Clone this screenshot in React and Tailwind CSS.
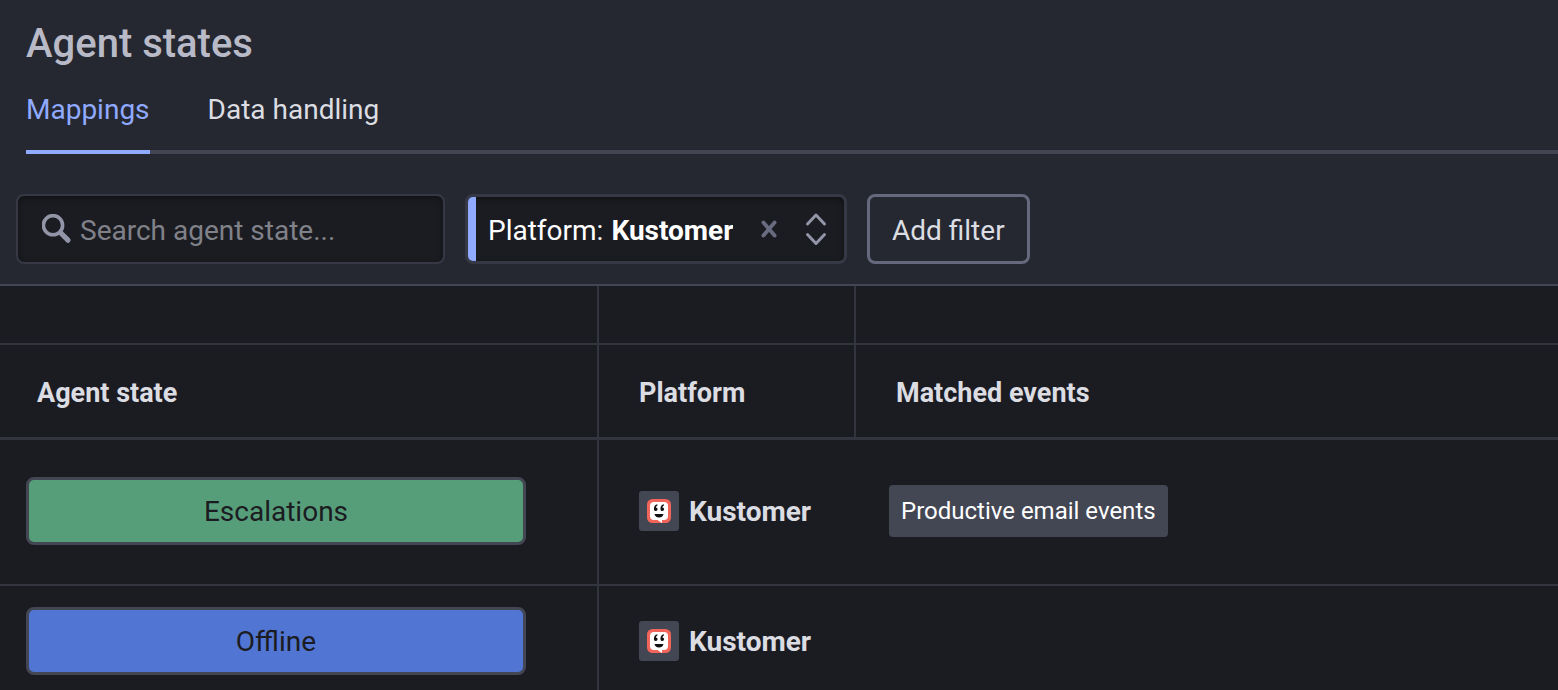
import { useState } from 'react';

const tabs = ['Mappings', 'Data handling'];

const agentStates = [
  { name: 'Escalations', color: 'bg-[#569e7a]', height: 'h-[146px]', platform: 'Kustomer', events: ['Productive email events'] },
  { name: 'Offline', color: 'bg-[#5175d3]', height: 'h-[114px]', platform: 'Kustomer', events: [] },
];

const SearchIcon = () => (
  <svg viewBox="0 0 30 30" className="h-[30px] w-[30px] flex-none" fill="none" stroke="#9294a8" aria-hidden="true">
    <circle cx="11" cy="11.2" r="9.6" strokeWidth="3.6" />
    <path d="M18.8 19L26 26.2" strokeWidth="5.2" strokeLinecap="round" />
  </svg>
);

const CloseIcon = () => (
  <svg viewBox="0 0 16 18" className="h-[18px] w-4" fill="none" stroke="#696b80" strokeWidth="3.8" strokeLinecap="round" aria-hidden="true">
    <path d="M2.4 2.4L13.6 15.6M13.6 2.4L2.4 15.6" />
  </svg>
);

const SortIcon = () => (
  <svg viewBox="0 0 22 34" className="h-[34px] w-[22px] flex-none" fill="none" stroke="#9294a8" strokeWidth="3" strokeLinecap="round" strokeLinejoin="round" aria-hidden="true">
    <path d="M2.5 12L11 3L19.5 12M2.5 22.5L11 31.5L19.5 22.5" />
  </svg>
);

const KustomerLogo = () => (
  <span className="flex h-10 w-10 flex-none items-center justify-center rounded-[3px] bg-[#434653]">
    <svg viewBox="0 0 24 24" className="h-6 w-6" aria-hidden="true">
      <rect width="24" height="24" rx="5.5" fill="#f2655a" />
      <path d="M7 3H17Q21 3 21 7V17Q21 21 17 21H15V24L10.5 21H7Q3 21 3 17V7Q3 3 7 3Z" fill="#fff" />
      <path d="M10.4 5.2C8 5.6 7 7.3 7 9.6V10.4A1.8 1.8 0 1 0 8.9 8.5C9 7.6 9.5 6.9 10.4 6.5Z" fill="#111" />
      <path d="M16.9 5.2C14.5 5.6 13.5 7.3 13.5 9.6V10.4A1.8 1.8 0 1 0 15.4 8.5C15.5 7.6 16 6.9 16.9 6.5Z" fill="#111" />
      <path d="M7.5 15H16.5C16 17.3 14.3 18.6 12 18.6S8 17.3 7.5 15Z" fill="#111" />
    </svg>
  </span>
);

const App = () => {
  const [activeTab, setActiveTab] = useState('Mappings');
  const [search, setSearch] = useState('');
  const [platform, setPlatform] = useState('Kustomer');

  const rows = agentStates.filter(
    (state) =>
      state.name.toLowerCase().includes(search.toLowerCase()) &&
      (platform === 'Any' || state.platform === platform)
  );

  return (
    <div className="h-screen overflow-hidden bg-[#1b1c21] font-[Roboto,sans-serif] text-[28px] leading-9 text-[#dcdde3]">
      <header className="border-b-2 border-[#434553] bg-[#252830]">
        <h1 className="px-[26px] pt-5 text-[40px] leading-[48px] font-medium text-[#b9bac7]">Agent states</h1>

        <div className="pl-[26px]">
          <div role="tablist" className="flex gap-[58px] border-b-4 border-[#434553]">
            {tabs.map((tab) => (
              <button
                key={tab}
                role="tab"
                aria-selected={activeTab === tab}
                onClick={() => setActiveTab(tab)}
                className={`-mb-1 border-b-4 pt-6 pb-[22px] ${
                  activeTab === tab ? 'border-[#8faaff] text-[#8faaff]' : 'border-transparent'
                }`}
              >
                {tab}
              </button>
            ))}
          </div>
        </div>

        <div className="flex gap-5 px-4 pt-10 pb-5">
          <label className="flex h-[70px] w-[429px] items-center gap-2 rounded-lg border-2 border-[#363945] bg-[#1b1c21] px-6 shadow-[inset_0_2px_6px_rgba(0,0,0,0.4)]">
            <SearchIcon />
            <input
              type="text"
              aria-label="Search agent state"
              placeholder="Search agent state..."
              value={search}
              onChange={(e) => setSearch(e.target.value)}
              className="w-full min-w-0 bg-transparent pt-1 outline-none placeholder:text-[#808189]"
            />
          </label>

          <div className="flex h-[70px] w-[382px] items-center overflow-hidden rounded-lg border-3 border-[#363945] bg-[#1b1c21] pr-[17px] text-white shadow-[inset_0_2px_6px_rgba(0,0,0,0.4)]">
            <span className="mr-3 w-2 self-stretch bg-[#8faaff]"></span>
            <label htmlFor="platform" className="pt-1">Platform:</label>
            <select
              id="platform"
              value={platform}
              onChange={(e) => setPlatform(e.target.value)}
              className="ml-2 appearance-none bg-transparent pt-1 font-bold outline-none field-sizing-content"
            >
              <option>Kustomer</option>
              <option hidden>Any</option>
            </select>
            <button aria-label="Clear platform filter" onClick={() => setPlatform('Any')} className="mr-7 ml-auto">
              <CloseIcon />
            </button>
            <SortIcon />
          </div>

          <button className="h-[70px] rounded-lg border-3 border-[#66687d] px-[22px] pt-1">Add filter</button>
        </div>
      </header>

      <table className="w-full table-fixed border-separate border-spacing-0 text-left">
        <colgroup>
          <col className="w-[599px]" />
          <col className="w-[257px]" />
          <col />
        </colgroup>
        <thead>
          <tr className="h-[59px]">
            <td className="border-r-2 border-b-2 border-[#32343e]"></td>
            <td className="border-r-2 border-b-2 border-[#32343e]"></td>
            <td className="border-b-2 border-[#32343e]"></td>
          </tr>
          <tr className="h-[95px] text-[27px]">
            <th className="border-r-2 border-b-3 border-[#32343e] pt-1 pl-[37px] font-bold">Agent state</th>
            <th className="border-r-2 border-b-3 border-[#32343e] pt-1 pl-10 font-bold">Platform</th>
            <th className="border-b-3 border-[#32343e] pt-1 pl-10 font-bold">Matched events</th>
          </tr>
        </thead>
        <tbody>
          {rows.map((state) => (
            <tr key={state.name} className={state.height}>
              <td className="border-r-2 border-b-2 border-[#32343e] pr-[71px] pb-0.5 pl-[26px]">
                <div className={`flex h-[68px] items-center justify-center rounded-lg border-3 border-[#434653] pt-0.5 text-[#1b1c21] ${state.color}`}>
                  {state.name}
                </div>
              </td>
              <td className="border-b-2 border-[#32343e] pb-0.5 pl-10">
                <div className="flex items-center gap-[10px] font-bold">
                  <KustomerLogo />
                  <span className="pt-0.5">{state.platform}</span>
                </div>
              </td>
              <td className="border-b-2 border-[#32343e] pb-0.5 pl-[33px]">
                {state.events.map((event) => (
                  <span key={event} className="inline-flex h-[52px] items-center rounded-[4px] bg-[#434653] px-3 text-2xl text-white">
                    {event}
                  </span>
                ))}
              </td>
            </tr>
          ))}
        </tbody>
      </table>
    </div>
  );
};

export default App;
